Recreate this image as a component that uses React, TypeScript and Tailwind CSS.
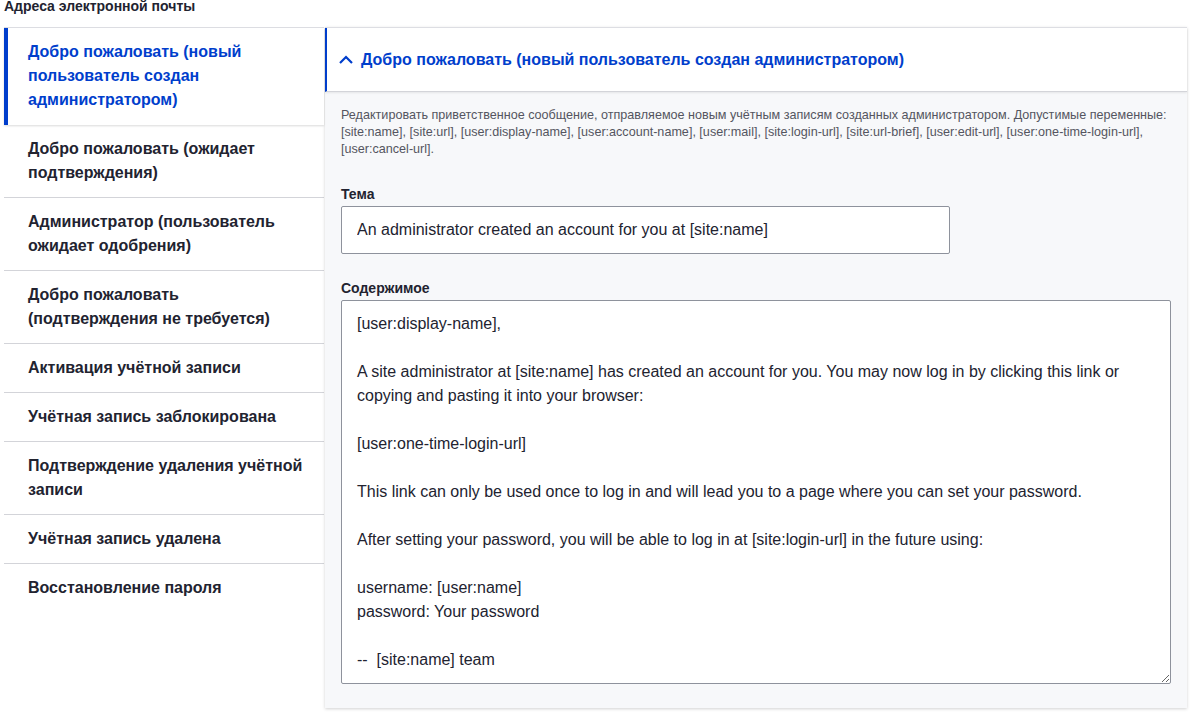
const tabs = [
  "Добро пожаловать (новый пользователь создан администратором)",
  "Добро пожаловать (ожидает подтверждения)",
  "Администратор (пользователь ожидает одобрения)",
  "Добро пожаловать (подтверждения не требуется)",
  "Активация учётной записи",
  "Учётная запись заблокирована",
  "Подтверждение удаления учётной записи",
  "Учётная запись удалена",
  "Восстановление пароля",
];

const body = `[user:display-name],

A site administrator at [site:name] has created an account for you. You may now log in by clicking this link or copying and pasting it into your browser:

[user:one-time-login-url]

This link can only be used once to log in and will lead you to a page where you can set your password.

After setting your password, you will be able to log in at [site:login-url] in the future using:

username: [user:name]
password: Your password

--  [site:name] team`;

export default function App() {
  return (
    <div className="min-h-[715px] bg-white font-['Liberation_Sans',Arial,sans-serif] text-[#222330]">
      <div className="px-1">
        <h2 className="text-[14px] font-bold leading-[13px] text-[#222330]">
          Адреса электронной почты
        </h2>

        <div className="mt-[14px] flex items-start">
          {/* menu */}
          <ul className="w-[320px] shrink-0 border-t border-[#dedfe4]">
            {tabs.map((t, i) =>
              i === 0 ? (
                <li
                  key={t}
                  className="relative z-10 border-l-4 border-[#003ecc] bg-white pb-[13px] pt-[12px] pl-[20px] pr-5 text-[16px] font-bold leading-[24px] text-[#003ecc] shadow-[0_1px_2px_rgba(0,0,0,0.15)]"
                >
                  {t}
                </li>
              ) : (
                <li
                  key={t}
                  className={
                    "py-[12px] pl-[24px] pr-5 text-[16px] font-bold leading-[24px] text-[#222330] " +
                    (i === tabs.length - 1 ? "" : "border-b border-[#d3d4d9]")
                  }
                >
                  {t}
                </li>
              )
            )}
          </ul>

          {/* panel */}
          <div className="ml-px w-[862px] border-t border-[#dedfe4] bg-[#f7f8fa] shadow-[0_1px_3px_rgba(0,0,0,0.18)]">
            <div className="flex h-[64px] items-center gap-[6px] border-b border-l-2 border-[#d3d4d9] border-l-[#003ecc] bg-white pl-[10px] shadow-[0_1px_2px_rgba(0,0,0,0.08)]">
              <svg width="18" height="18" viewBox="0 0 18 18" fill="none">
                <path
                  d="M3 12 L9 6 L15 12"
                  stroke="#003ecc"
                  strokeWidth="2.2"
                />
              </svg>
              <span className="text-[16px] font-bold text-[#003ecc]">
                Добро пожаловать (новый пользователь создан администратором)
              </span>
            </div>

            <div className="pb-6 pl-4 pr-3 pt-[15px]">
              <p className="text-[12.6px] leading-[17px] text-[#545560]">
                Редактировать приветственное сообщение, отправляемое новым учётным записям созданных администратором. Допустимые переменные: [site:name], [site:url], [user:display-name], [user:account-name], [user:mail], [site:login-url], [site:url-brief], [user:edit-url], [user:one-time-login-url], [user:cancel-url].
              </p>

              <label className="mt-[27px] block text-[14px] font-bold leading-[19px]">
                Тема
              </label>
              <input
                type="text"
                defaultValue="An administrator created an account for you at [site:name]"
                className="mt-[2px] block h-[48px] w-[609px] rounded-[2px] border border-[#8e929c] bg-white px-[15px] text-[16px] text-[#222330] outline-none"
              />

              <label className="mt-[25px] block text-[14px] font-bold leading-[19px]">
                Содержимое
              </label>
              <textarea
                defaultValue={body}
                className="mt-[2px] block h-[384px] w-[830px] resize-y rounded-[2px] border border-[#8e929c] bg-white px-[15px] pb-[9px] pt-[11px] text-[16px] leading-[24px] text-[#222330] outline-none"
              />
            </div>
          </div>
        </div>
      </div>
    </div>
  );
}
